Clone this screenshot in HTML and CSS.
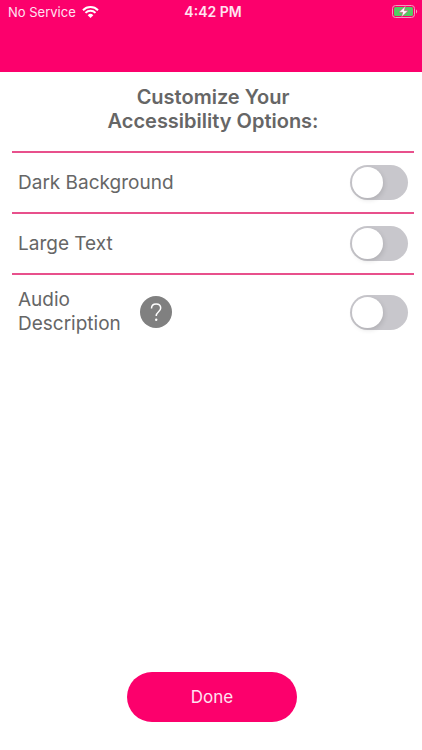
FILE: index.html
```html
<!DOCTYPE html>
<html lang="en">
<head>
  <meta charset="UTF-8">
  <meta name="viewport" content="width=device-width, initial-scale=1">
  <title>Accessibility Options</title>
  <link rel="stylesheet" href="styles.css">
</head>
<body>

  <header class="top-bar">
    <div class="carrier">
      <span>No Service</span>
      <svg class="wifi" viewBox="0 0 17 12" aria-hidden="true">
        <path d="M1 4.2a10.6 10.6 0 0 1 15 0" />
        <path d="M3.5 6.9a7.1 7.1 0 0 1 10 0" />
        <path class="dot" d="M8.500 12L5.700 9.200a4 4 0 0 1 5.600 0z" />
      </svg>
    </div>
    <div class="time">4:42 PM</div>
    <div class="battery">
      <svg viewBox="0 0 26 13" aria-hidden="true">
        <rect class="shell" x="0.500" y="0.500" width="22" height="12" rx="3" />
        <rect class="charge" x="2" y="2" width="19" height="9" rx="1.500" />
        <path class="cap" d="M24 4.500c1.600 0.500 1.600 3.500 0 4z" />
        <path class="bolt" d="M13.500 1L7 7.300h3.800L9.500 12 16 5.700h-3.800z" />
      </svg>
    </div>
  </header>

  <main class="content">
    <h1>Customize Your<br>Accessibility Options:</h1>

    <div class="options">
      <div class="row">
        <label for="darkBackground">Dark Background</label>
        <input type="checkbox" role="switch" class="switch" id="darkBackground">
      </div>
      <div class="row">
        <label for="largeText">Large Text</label>
        <input type="checkbox" role="switch" class="switch" id="largeText">
      </div>
      <div class="row row-tall">
        <label for="audioDescription">Audio<br>Description</label>
        <button type="button" class="help-btn" aria-label="About audio description">
          <svg viewBox="0 0 32 32" aria-hidden="true">
            <path d="M11.500 12.500c0-2.900 1.900-4.500 4.600-4.500 2.600 0 4.600 1.600 4.600 4.100 0 3.700-4.500 3.600-4.500 7.900" />
            <circle cx="16.200" cy="23.800" r="1.200" />
          </svg>
        </button>
        <input type="checkbox" role="switch" class="switch" id="audioDescription">
      </div>
    </div>
  </main>

  <footer class="bottom">
    <button type="button" class="done-btn">Done</button>
  </footer>

</body>
</html>
```
FILE: styles.css
```css
* {
  box-sizing: border-box;
}

body {
  margin: 0;
  min-height: 100vh;
  display: flex;
  flex-direction: column;
  background: #ffffff;
  color: #666666;
  font-family: Inter, "Liberation Sans", sans-serif;
  font-size: 19px;
  line-height: 24px;
}

/* status bar */
.top-bar {
  display: grid;
  grid-template-columns: 1fr auto 1fr;
  align-items: start;
  height: 72px;
  padding: 4px 4px 0 8px;
  background: #fc006c;
  color: #ffe3f1;
  font-size: 13px;
  line-height: 16px;
}
.carrier {
  display: flex;
  align-items: center;
  gap: 6px;
}
.wifi {
  width: 17px;
  height: 12px;
  fill: none;
  stroke: #ffffff;
  stroke-width: 2;
}
.wifi .dot {
  fill: #ffffff;
  stroke: none;
}
.time {
  font-size: 14px;
  font-weight: 600;
}
.battery {
  display: flex;
  justify-content: flex-end;
}
.battery svg {
  width: 26px;
  height: 13px;
  margin-top: 1px;
}
.shell {
  fill: none;
  stroke: #f59ac0;
}
.charge {
  fill: #52cc62;
}
.cap {
  fill: #f59ac0;
}
.bolt {
  fill: #ffffff;
  stroke: #e0407c;
  stroke-width: 0.5;
}

/* options list */
.content {
  flex: 1;
  padding: 13px 8px 0 12px;
}
h1 {
  margin: 0 0 18px;
  font-size: 20px;
  font-weight: 600;
  line-height: 24px;
  text-align: center;
}
.row {
  display: flex;
  align-items: center;
  height: 61px;
  padding: 0 6px;
  border-top: 2px solid #e8508c;
}
.row-tall {
  height: 76px;
}
.switch {
  appearance: none;
  flex: none;
  width: 58px;
  height: 35px;
  margin: 0 0 0 auto;
  padding: 2px;
  border-radius: 18px;
  background: #c8c7cc;
  cursor: pointer;
}
.switch::before {
  content: "";
  display: block;
  width: 31px;
  height: 31px;
  border-radius: 50%;
  background: #ffffff;
  box-shadow: 1px 2px 5px rgba(0, 0, 0, 0.12);
}
.switch:checked {
  background: #fc006c;
}
.switch:checked::before {
  margin-left: auto;
}
.help-btn {
  width: 32px;
  height: 32px;
  margin-left: 19px;
  padding: 0;
  border: none;
  border-radius: 50%;
  background: #808080;
  cursor: pointer;
}
.help-btn svg {
  display: block;
  fill: none;
  stroke: #ffffff;
  stroke-width: 1.5;
}
.help-btn circle {
  fill: #ffffff;
  stroke: none;
}

.bottom {
  display: flex;
  justify-content: center;
  padding: 0 0 28px 2px;
}
.done-btn {
  width: 170px;
  height: 50px;
  border: none;
  border-radius: 25px;
  background: #fc006c;
  color: #ffe3f1;
  font-family: inherit;
  font-size: 17px;
  cursor: pointer;
}
```
